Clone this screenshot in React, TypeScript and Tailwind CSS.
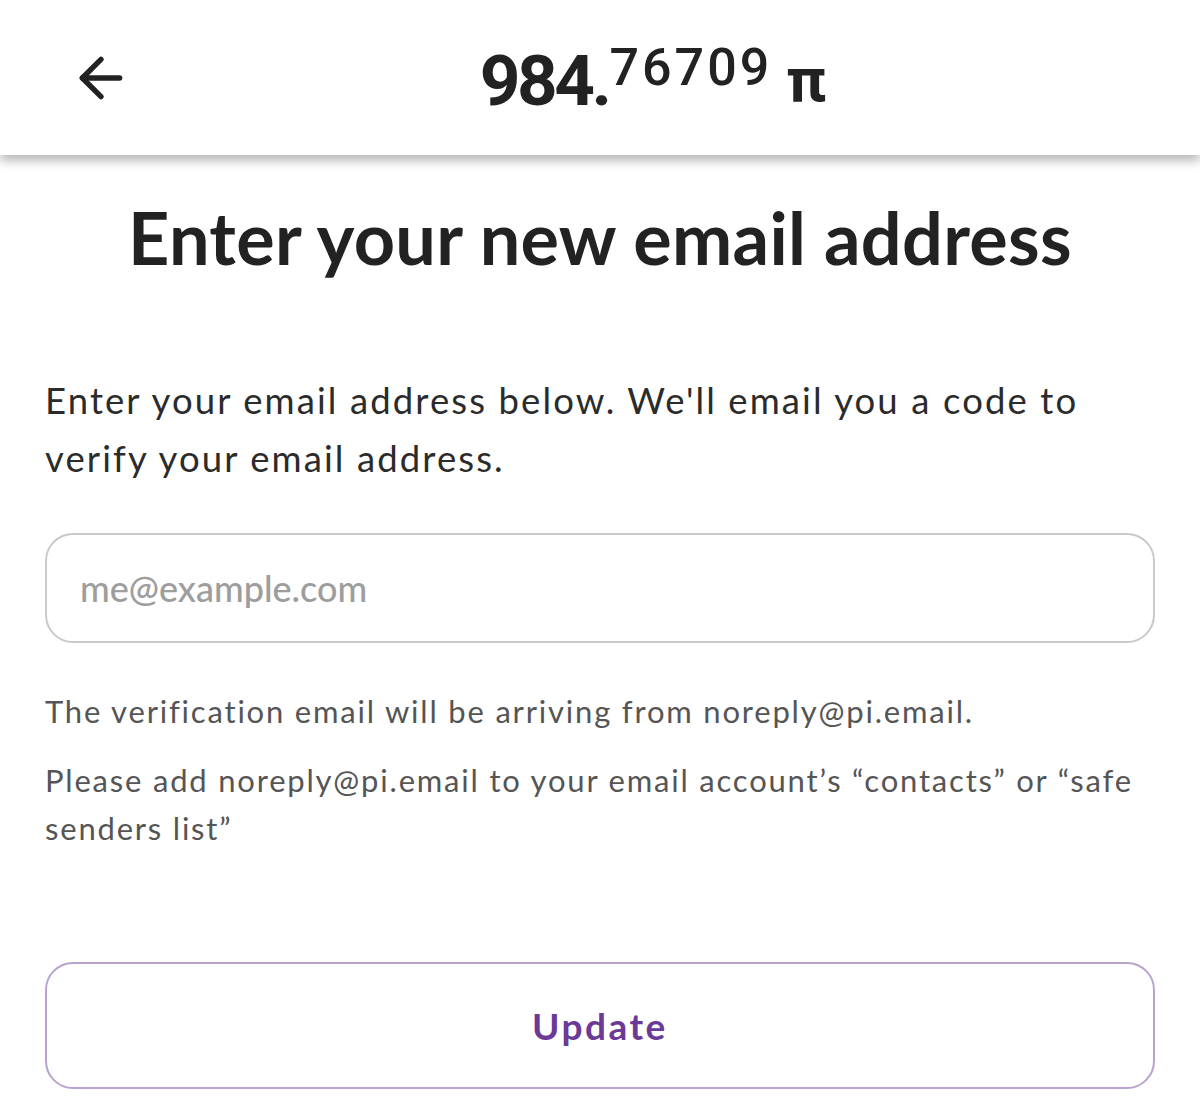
import { ArrowLeft } from 'lucide-react';

const Header = () => (
  <header className="relative z-10 flex h-[155px] items-center justify-center bg-white pl-[106px] shadow-[0_6px_10px_rgba(0,0,0,0.28)]">
    <button className="absolute left-[69px] top-[46px] text-[#222]">
      <ArrowLeft className="h-[64px] w-[64px]" strokeWidth={2} />
    </button>
    <div className="-mt-[30px] flex items-start font-['Roboto',sans-serif] text-[#222]">
      <span className="mt-[36px] text-[71px] font-bold leading-none tracking-[-3.5px]">984.</span>
      <span className="ml-[1px] mt-[33px] text-[52px] font-medium leading-none tracking-[3px]">76709</span>
      <span className="ml-[14px] mt-[40px] text-[62px] font-bold leading-none">π</span>
    </div>
  </header>
);

const App = () => {
  return (
    <div className="min-h-[1110px] w-[1200px] overflow-hidden bg-white font-['Lato',sans-serif]">
      <Header />
      <main className="px-[45px]">
        <h1 className="mt-[42px] text-center text-[72px] font-bold leading-[80px] tracking-[0.3px] text-[#222]">
          Enter your new email address
        </h1>
        <p className="mt-[94px] text-[36.5px] leading-[58px] tracking-[2.1px] text-[#2b2b2b]">
          Enter your email address below. We'll email you a code to verify your email address.
        </p>
        <div className="mt-[46px] flex h-[110px] items-center rounded-[28px] border-2 border-[#c9c9c9] px-[33px]">
          <input
            className="w-full bg-transparent text-[36px] font-medium text-[#222] outline-none placeholder:text-[#9d9d9d]"
            placeholder="me@example.com"
          />
        </div>
        <p className="mt-[44px] text-[31px] leading-[48px] tracking-[1.8px] text-[#555]">
          The verification email will be arriving from noreply@pi.email.
        </p>
        <p className="mt-[21px] text-[31px] leading-[48px] tracking-[1.8px] text-[#555]">
          Please add noreply@pi.email to your email account’s “contacts” or “safe senders list”
        </p>
        <button className="mt-[110px] flex h-[127px] w-full items-center justify-center rounded-[28px] border-2 border-[#b8a3cf] text-[37px] font-bold tracking-[2.5px] text-[#6a3a96]">
          Update
        </button>
      </main>
    </div>
  );
};

export default App;
